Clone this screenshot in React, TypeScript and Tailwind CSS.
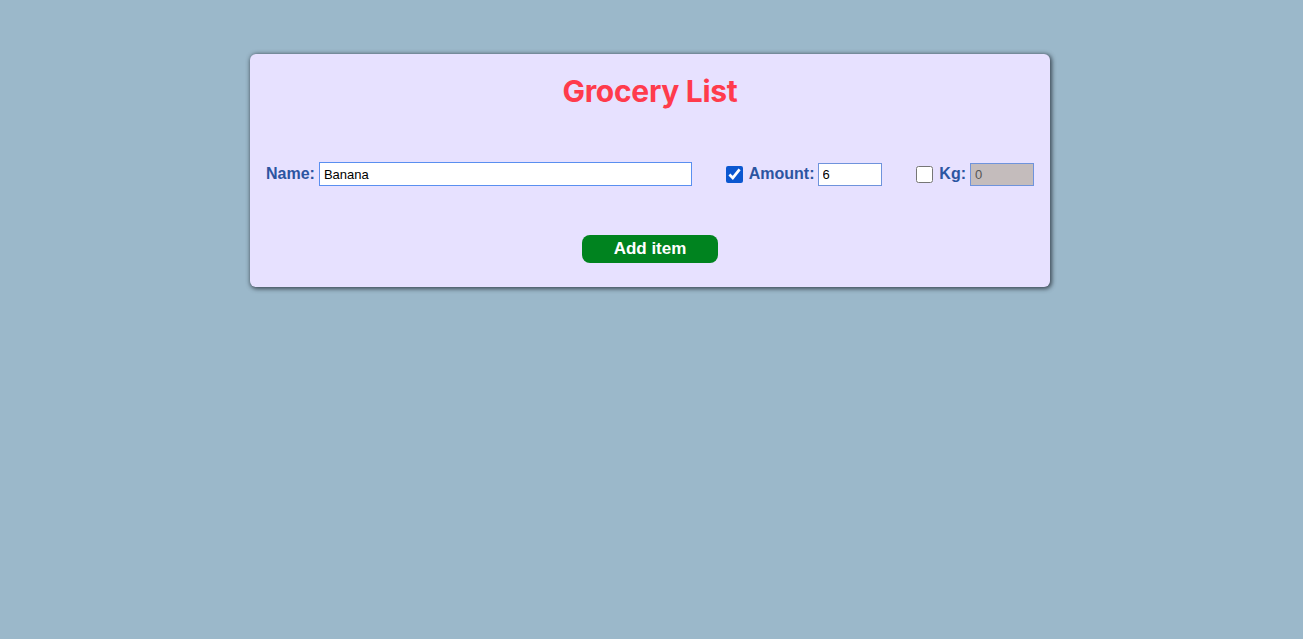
import React, { useState } from "react";

const App = () => {
  const [name, setName] = useState("Banana");
  const [useAmount, setUseAmount] = useState(true);
  const [amount, setAmount] = useState("6");
  const [useKg, setUseKg] = useState(false);
  const [kg, setKg] = useState("0");

  return (
    <div className="min-h-screen w-full bg-[#9bb8ca] pt-[54px] font-['Liberation_Sans',Arial,sans-serif]">
      <div className="ml-[250px] w-[800px] rounded-md bg-[#e7e1ff] px-4 pt-[20px] pb-[24px] shadow-[1px_1px_4px_1px_rgba(40,50,60,0.8)]">
        <h1 className="text-center font-['Inter',sans-serif] text-[30px] font-bold leading-[34px] tracking-[-0.01em] text-[#ff3b4c]">
          Grocery List
        </h1>

        <div className="mt-[54px] flex items-center justify-between text-[16px] font-bold text-[#2c55a1]">
          <div className="flex items-center gap-1">
            <label htmlFor="name">Name:</label>
            <input
              id="name"
              value={name}
              onChange={(e) => setName(e.target.value)}
              className="h-6 w-[373px] border border-[#5a8ff0] bg-white px-1 text-[13px] font-normal text-black outline-none"
            />
          </div>

          <div className="flex items-center">
            <input
              type="checkbox"
              checked={useAmount}
              onChange={(e) => setUseAmount(e.target.checked)}
              className="mr-[6px] h-[17px] w-[17px] accent-[#0b57d0]"
            />
            <label className="mr-[3px]">Amount:</label>
            <input
              value={amount}
              disabled={!useAmount}
              onChange={(e) => setAmount(e.target.value)}
              className="mr-[1px] h-[23px] w-16 border border-[#6f93dc] bg-white px-1 text-[13px] font-normal text-black outline-none disabled:bg-[#c4bcbc]"
            />
          </div>

          <div className="flex items-center">
            <input
              type="checkbox"
              checked={useKg}
              onChange={(e) => setUseKg(e.target.checked)}
              className="mr-[6px] h-[17px] w-[17px] accent-[#0b57d0]"
            />
            <label className="mr-1">Kg:</label>
            <input
              value={kg}
              disabled={!useKg}
              onChange={(e) => setKg(e.target.value)}
              className="h-[23px] w-16 border border-[#6f93dc] bg-white px-1 text-[13px] font-normal text-[#555] outline-none disabled:bg-[#c4bcbc]"
            />
          </div>
        </div>

        <div className="mt-[49px] flex justify-center">
          <button
            type="button"
            className="h-7 w-[136px] rounded-lg bg-[#00831f] text-[17px] font-bold text-white"
          >
            Add item
          </button>
        </div>
      </div>
    </div>
  );
};

export default App;
